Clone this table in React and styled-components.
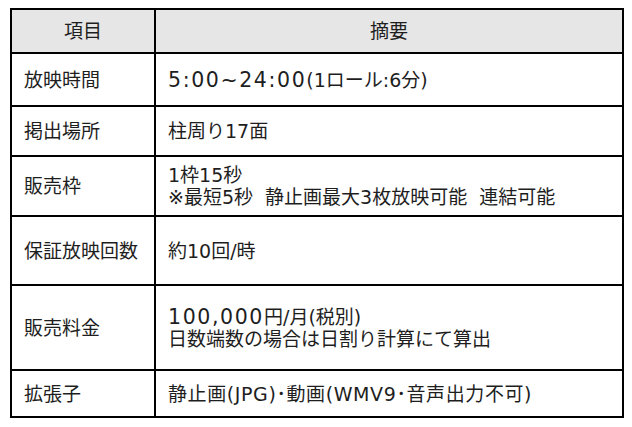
import React from "react";
import styled, { createGlobalStyle } from "styled-components";

const Global = createGlobalStyle`
  html, body { margin: 0; padding: 0; background: #ffffff; }
  body { font-family: "DejaVu Sans", "Noto Sans CJK JP", sans-serif; color: #1e1e1e; }
`;

const Page = styled.div`
  padding: 8px 0 0 10px;
`;

const Table = styled.div`
  display: grid;
  grid-template-columns: 142px 466px;
  grid-template-rows: 42px 51px 48px 58px 67px 83px 45px;
  gap: 2px;
  padding: 2px;
  width: max-content;
  background: #000;
`;

const Cell = styled.div`
  display: flex;
  flex-direction: column;
  justify-content: center;
  background: #fff;
  font-size: 19px;
  line-height: 22px;
  white-space: pre;
`;

const HeadCell = styled(Cell)`
  background: #e6e6e6;
  align-items: center;
`;

const LabelCell = styled(Cell)`
  padding-left: 12px;
`;

const ValueCell = styled(Cell)`
  padding-left: 12px;
`;

const Line = styled.div`
  letter-spacing: ${(p) => p.$track || 0}px;
`;

const Big = styled.span`
  font-size: 20.5px;
  letter-spacing: 1.6px;
`;

const rows = [
  { label: "放映時間", lines: [<><Big>5:00~24:00</Big>(1ロール:6分)</>] },
  { label: "掲出場所", lines: ["柱周り17面"] },
  { label: "販売枠", lines: ["1枠15秒", "※最短5秒  静止画最大3枚放映可能  連結可能"] },
  { label: "保証放映回数", lines: ["約10回/時"] },
  { label: "販売料金", lines: [<><Big>100,000</Big>円/月(税別)</>, "日数端数の場合は日割り計算にて算出"] },
  { label: "拡張子", lines: ["静止画(JPG)･動画(WMV9･音声出力不可)"], track: 0.6 },
];

export default function App() {
  return (
    <>
      <Global />
      <Page>
        <Table>
          <HeadCell>項目</HeadCell>
          <HeadCell>摘要</HeadCell>
          {rows.map((r) => (
            <React.Fragment key={r.label}>
              <LabelCell>{r.label}</LabelCell>
              <ValueCell>
                {r.lines.map((l, i) => (
                  <Line key={i} $track={r.track}>{l}</Line>
                ))}
              </ValueCell>
            </React.Fragment>
          ))}
        </Table>
      </Page>
    </>
  );
}
